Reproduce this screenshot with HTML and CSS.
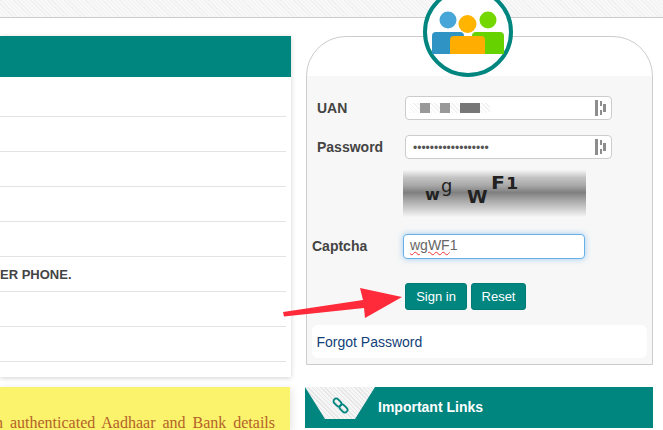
FILE: index.html
```html
<!DOCTYPE html>
<html lang="en">
<head>
<meta charset="utf-8">
<title>Member Login</title>
<link rel="stylesheet" href="styles.css">
</head>
<body>
<div class="topbar"></div>
<main class="main">
  <div class="left">
    <section class="card">
      <div class="card-head"></div>
      <div class="card-row first"></div>
      <div class="card-row"></div>
      <div class="card-row"></div>
      <div class="card-row"></div>
      <div class="card-row"></div>
      <div class="card-row"><strong class="row-text">ER PHONE.</strong></div>
      <div class="card-row"></div>
      <div class="card-row"></div>
    </section>
    <section class="notice">
      <p class="notice-text">n authenticated Aadhaar and Bank details</p>
    </section>
  </div>
  <div class="right">
    <section class="login">
      <div class="login-top"></div>
      <form class="login-body">
        <div class="field">
          <label class="field-label">UAN</label>
          <div class="input-box">
            <span class="mask"><i class="blk"></i><i class="blk"></i><i class="blk wide"></i></span>
            <svg class="pm" width="12" height="16" viewBox="0 0 12 16"><path d="M0 0h3v16H0zM5 1h2v5H5zM5 10h2v5H5zM8 4h3v8H8z" fill="#8d8d8d"/></svg>
          </div>
        </div>
        <div class="field gap">
          <label class="field-label">Password</label>
          <div class="input-box">
            <input class="pass" type="password" value="123456789012345678" readonly>
            <svg class="pm" width="12" height="16" viewBox="0 0 12 16"><path d="M0 0h3v16H0zM5 1h2v5H5zM5 10h2v5H5zM8 4h3v8H8z" fill="#8d8d8d"/></svg>
          </div>
        </div>
        <div class="captcha-img">
          <span class="c1">w</span><span class="c2">g</span><span class="c3">W</span><span class="c4">F</span><span class="c5">1</span>
        </div>
        <div class="field captcha-field">
          <label class="field-label cap-label">Captcha</label>
          <div class="cap-input"><span class="spell">wgWF</span>1</div>
        </div>
        <div class="buttons">
          <button class="btn signin" type="button">Sign in</button>
          <button class="btn reset" type="button">Reset</button>
        </div>
        <div class="forgot"><a href="#">Forgot Password</a></div>
      </form>
    </section>
    <section class="links">
      <div class="links-tab">
        <svg width="17" height="17" viewBox="0 0 17 17" fill="none" stroke="#00857f" stroke-width="1.800"><rect x="1" y="2.750" width="9" height="5.500" rx="2.750" transform="rotate(45 5.500 5.500)"/><rect x="7" y="8.750" width="9" height="5.500" rx="2.750" transform="rotate(45 11.500 11.500)"/></svg>
      </div>
      <h2 class="links-title">Important Links</h2>
    </section>
  </div>
</main>
<div class="logo">
  <svg width="82" height="82" viewBox="0 0 82 82">
    <defs><clipPath id="peop"><rect x="0" y="0" width="82" height="63"/></clipPath></defs>
    <g clip-path="url(#peop)">
      <circle cx="21" cy="29" r="8.500" fill="#48a5d8"/>
      <circle cx="61" cy="29" r="8.500" fill="#74d800"/>
      <rect x="5" y="41" width="32" height="30" rx="4" fill="#2f93c4"/>
      <rect x="45" y="41" width="32" height="30" rx="4" fill="#66d200"/>
      <circle cx="40.500" cy="33" r="9" fill="#ffb400"/>
      <rect x="23" y="45" width="35" height="30" rx="4" fill="#ffad00"/>
    </g>
  </svg>
</div>
<svg class="arrow" width="125" height="36" viewBox="0 0 125 36"><path d="M0 24L80 12 77 0 119 9 82 30 81 20 1 28.500z" fill="#ff2b3a"/></svg>
</body>
</html>
```
FILE: styles.css
```css
* { box-sizing: border-box; }
html, body { margin: 0; height: 430px; overflow: hidden; background: #fff; }
body { font-family: "Liberation Sans", Arial, sans-serif; position: relative; color: #444; }

.topbar {
  height: 18px;
  border-bottom: 1px solid #ccc;
  background: repeating-linear-gradient(45deg, #f1f1f1 0 1px, #f8f8f8 1px 3px);
}

.main { display: flex; padding-top: 18px; }

.left { width: 291px; flex: none; }
.card { background: #fff; box-shadow: 0 1px 5px rgba(0,0,0,.18); height: 341px; }
.card-head { height: 41px; background: #00857f; }
.card-row { height: 35px; margin-right: 5px; border-bottom: 1px solid #e3e3e3; display: flex; align-items: center; }
.card-row.first { height: 40px; }
.row-text { font-size: 13px; color: #444; }

.notice {
  margin-top: 10px;
  width: 290px;
  height: 43px;
  background: #fbf36b;
  padding-top: 26px;
  box-shadow: 2px 2px 8px rgba(0,0,0,.1);
}
.notice-text {
  margin: 0 15px 0 -5px;
  font-family: "Liberation Serif", "Times New Roman", serif;
  font-size: 16px;
  line-height: 20px;
  color: #b3622a;
  text-align: justify;
  text-align-last: justify;
}

.right { width: 348px; margin-left: 14px; flex: none; }

.login {
  margin-left: 1px;
  height: 329px;
  border: 1px solid #ccc;
  border-radius: 40px 40px 0 0;
  background: #fff;
  overflow: hidden;
}
.login-top { height: 39px; }
.login-body { height: 289px; background: #f7f7f7; padding: 20px 5px 0; }

.field { display: flex; align-items: center; height: 24px; }
.field.gap { margin-top: 15px; }
.field-label { width: 93px; padding-left: 5px; font-size: 14px; font-weight: bold; color: #444; flex: none; }

.input-box {
  width: 207px;
  height: 24px;
  background: #fff;
  border: 1px solid #ccc;
  border-radius: 4px;
  display: flex;
  align-items: center;
  justify-content: space-between;
  padding: 0 4px 0 0;
}
.mask {
  display: flex;
  gap: 10px;
  height: 10px;
  margin-left: 4px;
  padding: 0 10px;
  background: repeating-linear-gradient(45deg, #f1f1f1 0 1px, #fff 1px 3px);
}
.blk { display: block; width: 10px; height: 10px; background: #999; }
.blk.wide { width: 20px; background: #777; }
.pm { flex: none; }

.pass {
  border: 0;
  outline: 0;
  background: transparent;
  width: 170px;
  padding: 1px 0 0 7px;
  font-family: "Liberation Sans", Arial, sans-serif;
  font-size: 12px;
  color: #555;
  height: 20px;
}

.captcha-img {
  margin: 11px 0 0 91px;
  width: 183px;
  height: 47px;
  position: relative;
  font-family: "DejaVu Sans", sans-serif;
  font-weight: bold;
  color: #222;
  background: linear-gradient(180deg, #f6f6f6 0%, #c4c4c4 16%, #aaa 32%, #7f7f7f 48%, #a6a6a6 64%, #cdcdcd 82%, #f6f6f6 100%);
}
.captcha-img span { position: absolute; line-height: 1; transform-origin: left top; }
.c1 { left: 22px; top: 17px; font-size: 16px; }
.c2 { left: 38px; top: 8px; font-size: 17px; transform: scaleX(1.05); font-weight: normal; }
.c3 { left: 64px; top: 19px; font-size: 17px; transform: scaleX(1.100); }
.c4 { left: 88px; top: 5px; font-size: 17px; transform: scaleX(1.200); }
.c5 { left: 103px; top: 6px; font-size: 16px; transform: scaleX(1.100); }

.captcha-field { margin-top: 17px; height: 25px; }
.cap-label { width: 91px; padding: 0 0 2px; }
.cap-input {
  width: 182px;
  height: 25px;
  padding-left: 6px;
  background: #fff;
  border: 1px solid #66afe9;
  border-radius: 4px;
  box-shadow: 0 0 6px rgba(102,175,233,.6);
  font-size: 14px;
  line-height: 21px;
  color: #666;
}
.spell { text-decoration: underline wavy #e33; text-decoration-thickness: 1px; }

.buttons { display: flex; gap: 4px; margin: 24px 0 0 93px; }
.btn {
  height: 27px;
  background: #00857f;
  color: #fff;
  border: 1px solid #007a75;
  border-radius: 3px;
  font-family: "Liberation Sans", Arial, sans-serif;
  font-size: 13px;
  padding: 0;
}
.signin { width: 62px; }
.reset { width: 55px; }

.forgot {
  margin-top: 15px;
  height: 33px;
  background: #fff;
  border-radius: 6px;
  padding: 0 4.500px;
  display: flex;
  align-items: center;
  font-size: 14px;
}
.forgot a { color: #123f78; text-decoration: none; }

.links {
  margin-top: 22px;
  height: 41px;
  background: #00857f;
  display: flex;
  align-items: center;
}
.links-tab {
  width: 70px;
  height: 32px;
  align-self: flex-start;
  background: repeating-linear-gradient(45deg, #e6e6e6 0 1px, #f6f6f6 1px 3px);
  clip-path: polygon(0 0, 100% 0, 71.4% 100%, 28.6% 100%);
  display: flex;
  align-items: center;
  justify-content: center;
  padding-top: 5px;
  flex: none;
}
.links-title { margin: 0 0 2px 3px; font-size: 14px; font-weight: bold; color: #fff; }

.logo {
  position: absolute;
  left: 423px;
  top: -13px;
  width: 90px;
  height: 90px;
  border-radius: 50%;
  border: 4px solid #00857f;
  background: #fff;
}
.arrow { position: absolute; left: 283px; top: 288px; }
```
